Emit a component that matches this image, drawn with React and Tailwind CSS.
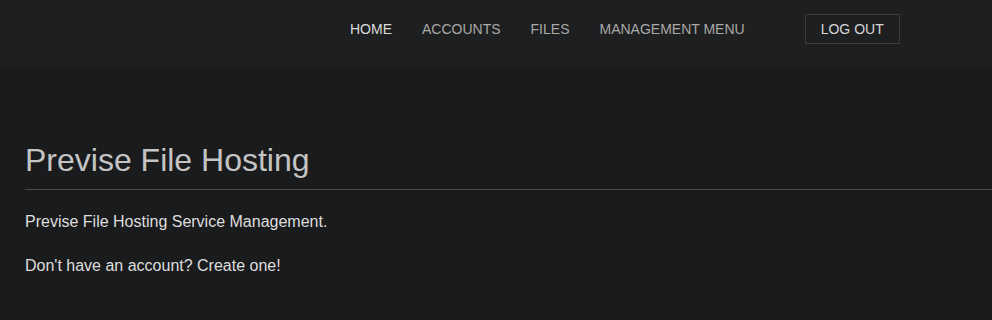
const navItems = ["HOME", "ACCOUNTS", "FILES", "MANAGEMENT MENU"];

const App = () => {
    return (
        <div className="min-h-[320px] bg-[#1a1b1d] font-['Liberation_Sans',Arial,sans-serif]">
            <header className="h-[68px] bg-[#1e1f21] flex items-start pt-[14px]">
                <nav className="flex items-center ml-[335px]">
                    {navItems.map((item, i) => (
                        <a
                            key={item}
                            href="#"
                            className={`px-[15px] h-[30px] leading-[30px] text-[14px] ${i === 0 ? "text-[#dcdcdc]" : "text-[#a9a9a5]"}`}>
                            {item}
                        </a>
                    ))}
                </nav>
                <button className="ml-[45px] h-[30px] px-[15px] border border-[#3a3b3d] text-[14px] text-[#d6d6d6] leading-[28px]">
                    LOG OUT
                </button>
            </header>
            <main className="pl-[25px] pt-[74px]">
                <h1 className="text-[32px] leading-[36px] text-[#c4c4c4] pb-[11px] border-b border-[#4a4b4d]">
                    Previse File Hosting
                </h1>
                <p className="mt-[21px] text-[16px] leading-[22px] text-[#dedede]">
                    Previse File Hosting Service Management.
                </p>
                <p className="mt-[22px] text-[16px] leading-[22px] text-[#dedede]">
                    Don't have an account? Create one!
                </p>
            </main>
        </div>
    );
};

export default App;
